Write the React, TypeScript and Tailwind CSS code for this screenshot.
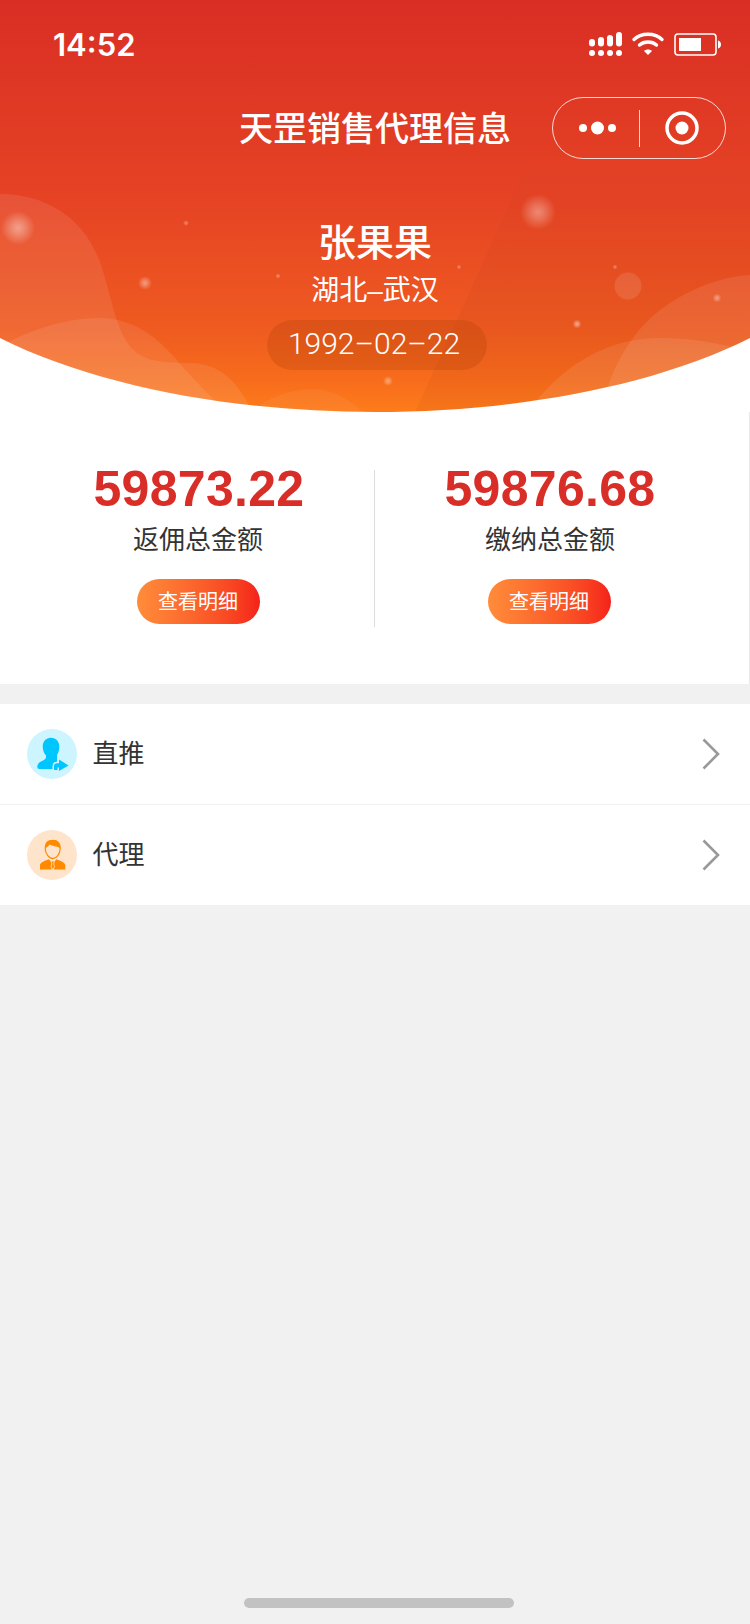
import React from "react";

const FONT = "[font-family:'Liberation_Sans','Noto_Sans_CJK_SC',sans-serif]";

function HeaderArt() {
  const glows: [number, number, number, number][] = [
    [18, 228, 17, 0.42], [145, 283, 7, 0.42], [186, 223, 3, 0.35], [278, 276, 2.500, 0.4],
    [538, 212, 18, 0.36], [459, 267, 2.500, 0.35], [615, 267, 2.500, 0.35], [577, 324, 4.500, 0.5],
    [388, 381, 5, 0.4], [717, 298, 4.500, 0.4],
  ];
  return (
    <svg className="absolute inset-0" width="750" height="412" viewBox="0 0 750 412">
      <defs>
        <linearGradient id="hg" x1="0" y1="0" x2="0" y2="1">
          <stop offset="0" stopColor="#d92e24" />
          <stop offset="0.5" stopColor="#e64424" />
          <stop offset="0.8" stopColor="#ef5b20" />
          <stop offset="0.92" stopColor="#f76c1c" />
          <stop offset="1" stopColor="#fd7c1a" />
        </linearGradient>
        <linearGradient id="beam" x1="0" y1="0" x2="0" y2="1">
          <stop offset="0" stopColor="#000" stopOpacity="0" />
          <stop offset="1" stopColor="#a02000" stopOpacity="0.07" />
        </linearGradient>
        <radialGradient id="glow">
          <stop offset="0" stopColor="#fff" stopOpacity="1" />
          <stop offset="0.35" stopColor="#fff" stopOpacity="0.7" />
          <stop offset="1" stopColor="#fff" stopOpacity="0" />
        </radialGradient>
        <clipPath id="hc">
          <path d="M0 338C100 388 240 412 375 412C510 412 650 388 750 338V0H0Z" />
        </clipPath>
      </defs>
      <g clipPath="url(#hc)">
        <rect width="750" height="412" fill="url(#hg)" />
        <path d="M415 412L535 148L750 148V412Z" fill="url(#beam)" />
        <path d="M0 194C50 194 88 222 102 268C114 306 118 344 142 356C152 362 172 363 192 363C222 364 240 385 252 412H0Z" fill="#fff" fillOpacity="0.09" />
        <path d="M8 342C40 326 72 318 98 318C138 318 162 342 182 366C198 384 212 398 226 412H0V346Z" fill="#fff" fillOpacity="0.09" />
        <path d="M258 406C276 394 296 389 312 389C334 389 350 400 362 412H258Z" fill="#fff" fillOpacity="0.05" />
        <path d="M601 412C612 362 636 322 678 298C702 284 728 276 750 275V412Z" fill="#fff" fillOpacity="0.09" />
        <path d="M528 412C562 364 608 338 660 338C690 338 716 342 750 352V412Z" fill="#fff" fillOpacity="0.09" />
        <circle cx="628" cy="286" r="13.500" fill="#fff" fillOpacity="0.11" />
        {glows.map(([x, y, r, o]) => (
          <circle key={`${x}-${y}`} cx={x} cy={y} r={r} fill="url(#glow)" opacity={o} />
        ))}
      </g>
    </svg>
  );
}

function StatusIcons() {
  return (
    <svg width="132" height="26" viewBox="0 0 132 26" fill="#fff" className="mt-[2px]">
      <rect x="0" y="7" width="6" height="7.500" rx="3" />
      <rect x="9" y="5" width="6" height="9.500" rx="3" />
      <rect x="18" y="3" width="6" height="11.500" rx="3" />
      <rect x="27" y="0" width="6" height="14.500" rx="3" />
      <circle cx="3" cy="21" r="3" /><circle cx="12" cy="21" r="3" />
      <circle cx="21" cy="21" r="3" /><circle cx="30" cy="21" r="3" />
      <path d="M45 7.500C52 0.500 66 0.500 73 7.500" fill="none" stroke="#fff" strokeWidth="3.400" strokeLinecap="round" />
      <path d="M50.500 13C55 9 63 9 67.500 13" fill="none" stroke="#fff" strokeWidth="3.400" strokeLinecap="round" />
      <path d="M55 19C57 17 61 17 63 19L59 23Z" />
      <rect x="86" y="2" width="41" height="21" rx="3" fill="none" stroke="#fff" strokeWidth="1.600" />
      <rect x="90" y="6" width="22" height="13" />
      <path d="M129 8.500C131 9 132 10.500 132 12.500C132 14.500 131 16 129 16.500Z" />
    </svg>
  );
}

function Capsule() {
  return (
    <div className="flex h-[62px] w-[174px] items-center rounded-full border border-white/80">
      <div className="flex w-[86px] items-center justify-center">
        <svg width="37" height="14" viewBox="0 0 37 14" fill="#fff" className="ml-[3px]">
          <circle cx="4" cy="7" r="4" /><circle cx="18.500" cy="7" r="6.500" /><circle cx="33" cy="7" r="4" />
        </svg>
      </div>
      <div className="h-[37px] w-px bg-white/80" />
      <div className="flex flex-1 items-center justify-center">
        <svg width="34" height="34" viewBox="0 0 34 34" className="ml-[-1px]">
          <circle cx="17" cy="17" r="15" fill="none" stroke="#fff" strokeWidth="3.500" />
          <circle cx="17" cy="17" r="6.500" fill="#fff" />
        </svg>
      </div>
    </div>
  );
}

function Stat({ value, label, labelClass }: { value: string; label: string; labelClass: string }) {
  return (
    <div className="flex flex-col items-center">
      <div className="text-[50px] leading-[38px] font-bold tracking-[0.3px] text-[#d92e28]">{value}</div>
      <div className={`mt-[14px] text-[26px] leading-[36px] text-[#333] ${labelClass}`}>{label}</div>
      <div className="mt-[21px] mr-[2px] flex h-[45px] w-[123px] items-center justify-center rounded-full bg-gradient-to-r from-[#ff8c3a] to-[#f5201a] text-[20px] text-white">
        查看明细
      </div>
    </div>
  );
}

function Chevron() {
  return (
    <svg width="18" height="32" viewBox="0 0 18 32" fill="none" stroke="#999" strokeWidth="2.600">
      <path d="M1.500 1.500L16 16L1.500 30.500" />
    </svg>
  );
}

function PushIcon() {
  const arrow = "M27 41V37C27 35.200 28.200 34.200 30 34.200H32V30.500L41.500 36.400L32 42V38.500H30.500V41Z";
  return (
    <svg width="50" height="50" viewBox="0 0 50 50">
      <circle cx="25" cy="25" r="25" fill="#ccf5ff" />
      <path d="M24 8.700C19 8.700 15.700 12.500 15.700 17.500C15.700 21 17 24.500 19 26.500V28.500C19 30 17 31 14 32.500C11.500 33.700 10.300 35.500 10.300 38C10.300 39.300 11 40 12.500 40H30V26C31.500 24 32.300 21 32.300 17.500C32.300 12.500 29 8.700 24 8.700Z" fill="#00c6ff" />
      <path d={arrow} fill="#ccf5ff" stroke="#ccf5ff" strokeWidth="3" />
      <path d={arrow} fill="#00c6ff" />
    </svg>
  );
}

function AgentIcon() {
  return (
    <svg width="50" height="50" viewBox="0 0 50 50">
      <circle cx="25" cy="25" r="25" fill="#ffe4cc" />
      <path d="M18.200 18C18.200 13 20.800 10.300 25.800 10.300C30.800 10.300 33.500 13.500 33.200 18.500C33 24 29.500 28.600 25.800 28.600C22 28.600 18.200 23.500 18.200 18Z" fill="#ffe4cc" stroke="#ff8a00" strokeWidth="1.200" />
      <path d="M18.200 18C18.200 13 20.800 10 25.800 10C30.800 10 33.500 13.500 33.200 18.800C31.500 16 27.500 16.800 22.500 14.500C21.500 16.500 20 17.500 18.200 18Z" fill="#ff8a00" />
      <path d="M13 39.500V35.500C13 32.500 17 31.200 21.800 29.300L24.500 32V39.500ZM38.300 39.500V35.500C38.300 32.500 34 31.200 29.500 29.300L27 32V39.500Z" fill="#ff8a00" />
      <path d="M24 31H27.500L26.700 33.500L27.500 37L25.800 39.500L24 37L24.800 33.500Z" fill="#ff8a00" stroke="#ffe4cc" strokeWidth="0.800" />
    </svg>
  );
}

function Row({ icon, label }: { icon: React.ReactNode; label: string }) {
  return (
    <div className="flex h-[100px] items-center bg-white pr-[30px] pl-[27px]">
      {icon}
      <div className="ml-[15.5px] flex-1 text-[26px] text-[#333]">{label}</div>
      <Chevron />
    </div>
  );
}

export default function App() {
  return (
    <div className={`flex h-[1624px] w-[750px] flex-col overflow-hidden bg-[#f1f1f1] ${FONT}`}>
      <header className="relative h-[412px] bg-white text-white">
        <HeaderArt />
        <div className="relative flex flex-col items-center">
          <div className="flex h-[88px] w-full items-center justify-between pr-[29px] pl-[53px]">
            <div className="[font-family:Inter,sans-serif] text-[31px] leading-none font-semibold">14:52</div>
            <StatusIcons />
          </div>
          <div className="mt-[9px] grid h-[62px] w-full grid-cols-[1fr_auto_1fr] items-center">
            <div />
            <div className="pt-[3px] text-[34px] font-medium">天罡销售代理信息</div>
            <div className="justify-self-end pr-[24px]"><Capsule /></div>
          </div>
          <div className="mt-[61px] text-[38px] leading-[46px] font-medium">张果果</div>
          <div className="mt-[7px] text-[28px] leading-[36px]">湖北–武汉</div>
          <div className="mt-[11px] ml-[4px] flex h-[50px] w-[220px] items-center justify-center rounded-full bg-[#a83a00]/25 pr-[6px] pb-[3px] [font-family:Roboto,sans-serif] text-[30px] font-light">
            1992–02–22
          </div>
        </div>
      </header>
      <section className="grid h-[272px] grid-cols-[351px_350px] border-r border-[#e8e8e8] bg-white px-[24px] pt-[58px]">
        <div className="h-[157px] border-r border-[#dcdcdc]">
          <Stat value="59873.22" label="返佣总金额" labelClass="mr-[2px]" />
        </div>
        <div className="h-[157px]">
          <Stat value="59876.68" label="缴纳总金额" labelClass="" />
        </div>
      </section>
      <section className="mt-[20px] flex flex-col">
        <Row icon={<PushIcon />} label="直推" />
        <div className="h-px bg-[#f1f1f1]" />
        <Row icon={<AgentIcon />} label="代理" />
      </section>
      <div className="flex flex-1 items-end justify-center pb-[16px] pl-[8px]">
        <div className="h-[10px] w-[270px] rounded-full bg-[#c2c2c2]" />
      </div>
    </div>
  );
}
